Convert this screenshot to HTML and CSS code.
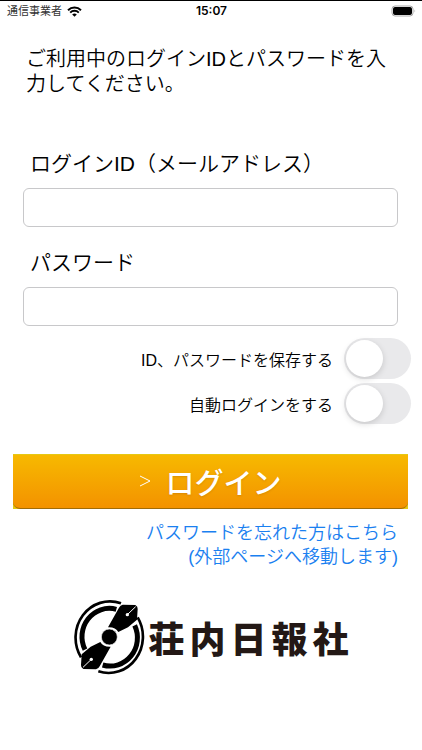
FILE: index.html
```html
<!DOCTYPE html>
<html lang="ja">

    <head>
        <meta charset="UTF-8">
        <meta name="viewport" content="width=device-width, initial-scale=1">
        <title>ログイン</title>
        <link rel="stylesheet" href="styles.css">
    </head>

    <body>
        <header class="status">
            <div class="carrier">
                <span>通信事業者</span>
                <svg class="wifi" viewBox="0 0 15 11">
                    <path d="M1 4.2a9.4 9.4 0 0 1 13 0M3.2 6.6a6.2 6.2 0 0 1 8.6 0" />
                    <path class="dot" d="M7.5 10.8 5.2 8.5a3.3 3.3 0 0 1 4.6 0z" />
                </svg>
            </div>
            <time class="clock">15:07</time>
            <svg class="battery" viewBox="0 0 25 12">
                <rect class="case" x="1" y="1" width="21" height="10" rx="3" />
                <rect x="2" y="2" width="19" height="8" rx="2" />
                <path class="tip" d="M23.5 4.5q1.5 1.5 0 3z" />
            </svg>
        </header>
        <main>
            <form class="login">
                <p class="lead">ご利用中のログインIDとパスワードを入力してください。</p>
                <div class="field">
                    <label for="loginId">ログインID（メールアドレス）</label>
                    <input type="email" id="loginId">
                </div>
                <div class="field">
                    <label for="password">パスワード</label>
                    <input type="password" id="password">
                </div>
                <div class="switches">
                    <label class="switch">ID、パスワードを保存する<input type="checkbox"></label>
                    <label class="switch">自動ログインをする<input type="checkbox"></label>
                </div>
                <button type="submit" class="submit">
                    <span class="face">
                        <svg class="arrow" viewBox="0 0 12 14"><path d="M1 2l10 5-10 5" /></svg>
                        <span>ログイン</span>
                    </span>
                </button>
                <a class="forgot" href="#">パスワードを忘れた方はこちら<br>(外部ページへ移動します)</a>
            </form>
        </main>
        <footer class="company">
            <svg class="mark" viewBox="42 26 216 228">
                <g class="ring">
                    <path class="outer" d="M186 39A103 109 0 0 0 66 201M236 81A103 109 0 0 1 118 243" />
                    <path class="inner" d="M172 57A82 85 0 0 0 78 178M227 105A82 85 0 0 1 131 224" />
                </g>
                <path d="M147 111L180 52q4-8 11-9l38 1q8 4 7 12l-2 32-27 23-29 14q-8-15-31-14z" />
                <path d="M155 169L122 228q-4 8-11 9l-38-1q-8-4-7-12l2-32 27-23 29-14q8 15 31 14z" />
                <circle class="hub" cx="151" cy="140" r="24" />
                <path class="slit" d="M230 49l-24 23M72 231l24-23" />
                <circle class="hole" cx="205" cy="73" r="5" />
                <circle class="hole" cx="97" cy="207" r="5" />
            </svg>
            <p class="name"><span>荘</span><span>内</span><span>日</span><span>報</span><span>社</span></p>
        </footer>
    </body>

</html>
```

FILE: styles.css
```css
* {
    box-sizing: border-box;
    margin: 0;
    padding: 0;
}

body {
    border-top: 1px solid #000;
    background: #fff;
    color: #000;
    font-family: "Liberation Sans", "Noto Sans CJK JP", sans-serif;
    font-weight: 350;
}

.status {
    display: grid;
    grid-template-columns: 1fr auto 1fr;
    align-items: center;
    height: 20px;
    padding: 0 6px 0 7px;
}

.carrier {
    display: flex;
    align-items: center;
    gap: 5px;
    font-size: 11px;
    font-weight: 400;
    line-height: 16px;
    color: #333;
}

.wifi {
    width: 15px;
    height: 11px;
    fill: none;
    stroke: #000;
    stroke-width: 2;
}

.wifi .dot {
    fill: #000;
    stroke: none;
}

.clock {
    font: 600 12px/16px Inter, sans-serif;
}

.battery {
    width: 25px;
    height: 12px;
    justify-self: end;
}

.battery .case {
    fill: none;
    stroke: #aaa;
}

.battery .tip {
    fill: #aaa;
}

.login {
    display: flex;
    flex-direction: column;
    padding: 26px 24px 0 23px;
}

.lead {
    padding: 0 8px 0 3px;
    font-size: 20px;
    line-height: 25px;
    margin-bottom: 51px;
}

.field {
    display: flex;
    flex-direction: column;
    gap: 8px;
    margin-bottom: 20px;
}

.field label {
    padding-left: 7px;
    font-size: 21px;
    line-height: 32px;
}

.field input {
    width: 100%;
    height: 39px;
    padding: 0 8px;
    border: 1px solid #c8c8ca;
    border-radius: 6px;
    font-size: 18px;
}

.switches {
    display: flex;
    flex-direction: column;
    gap: 4px;
    margin: -8px -13px 30px 0;
}

.switch {
    display: flex;
    align-items: center;
    justify-content: flex-end;
    gap: 11px;
    font-size: 16px;
}

.switch input {
    appearance: none;
    display: flex;
    width: 67px;
    height: 41px;
    padding: 2px;
    border-radius: 21px;
    background: #e9e9eb;
}

.switch input::before {
    content: "";
    width: 37px;
    height: 37px;
    border-radius: 50%;
    background: #fff;
    box-shadow: 0 2px 6px rgba(0, 0, 0, 0.15);
}

.switch input:checked {
    justify-content: flex-end;
    background: #34c759;
}

.submit {
    height: 55px;
    margin: 0 -10px 12px;
    border: 0;
    background: #e6c814;
}

.face {
    display: flex;
    align-items: center;
    justify-content: center;
    gap: 14px;
    height: 54px;
    border-bottom: 1px solid #a06c08;
    border-radius: 0 0 7px 7px;
    background: linear-gradient(#f7b900, #f39200);
    color: #fff;
    font: 500 29px/40px "Noto Sans CJK JP", sans-serif;
    text-shadow: 0 1px 2px rgba(160, 90, 0, 0.3);
}

.arrow {
    width: 12px;
    height: 14px;
    fill: none;
    stroke: #fff;
    stroke-width: 1;
}

.forgot {
    align-self: flex-end;
    color: #1a80f0;
    font-size: 18px;
    line-height: 24px;
    text-align: right;
    text-decoration: none;
}

.company {
    display: flex;
    align-items: center;
    justify-content: center;
    gap: 3px;
    padding: 30px 0 20px;
}

.mark {
    width: 72px;
    height: 76px;
}

.ring {
    fill: none;
    stroke: #000;
}

.ring .outer {
    stroke-width: 8;
}

.ring .inner {
    stroke-width: 15;
}

.hub {
    stroke: #fff;
    stroke-width: 2;
}

.slit {
    stroke: #fff;
    stroke-width: 3;
}

.hole {
    fill: #fff;
}

.name {
    display: flex;
    gap: 5px;
    color: #231815;
    font: 900 36px/48px "Noto Sans CJK JP", sans-serif;
}
```
